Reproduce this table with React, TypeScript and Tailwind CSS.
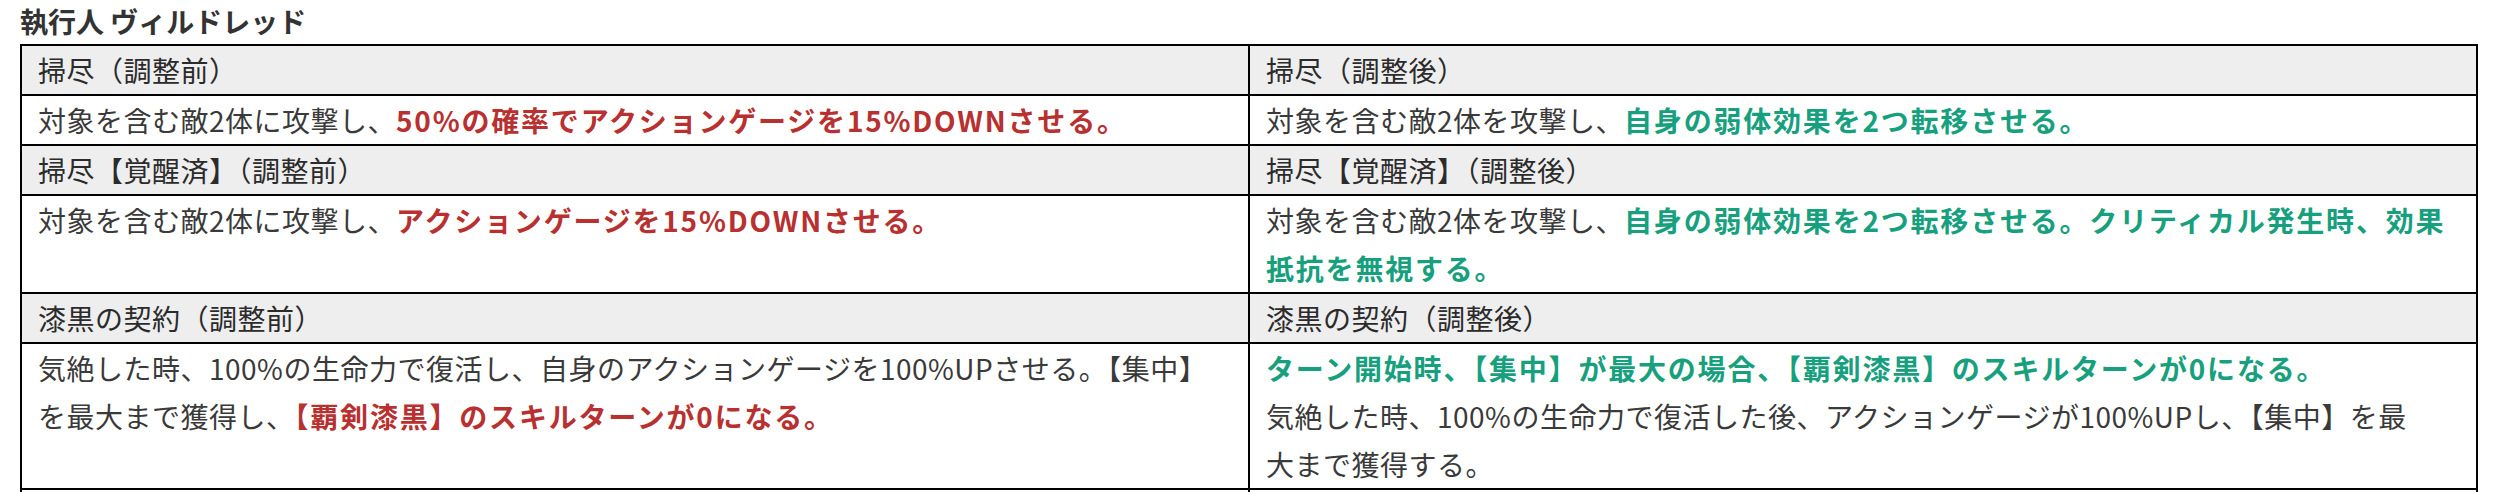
import type { ReactNode } from 'react'

const red = 'font-bold tracking-[1.8px] text-[#b8302f]'
const green = 'font-bold tracking-[1.8px] text-[#17a07d]'

function Head({ children }: { children: ReactNode }) {
  return (
    <div className="border-r-2 border-b-2 border-black bg-[#eeeeee] px-4 text-[#2b2b2b]">{children}</div>
  )
}

function Cell({ children }: { children: ReactNode }) {
  return (
    <div className="border-r-2 border-b-2 border-black bg-white px-4 whitespace-nowrap text-[#3a3a3a]">
      {children}
    </div>
  )
}

export default function App() {
  return (
    <div
      className="min-h-[492px] bg-white pl-5 text-[28px] leading-[48px] tracking-[0.5px]"
      style={{ fontFamily: '"Noto Sans CJK JP", "Noto Sans", sans-serif' }}
    >
      <h2 className="mb-[2px] font-bold leading-[42px] tracking-normal text-[#333333]">執行人 ヴィルドレッド</h2>
      <div className="grid w-[2458px] grid-cols-2 border-t-2 border-l-2 border-black">
        <Head>掃尽（調整前）</Head>
        <Head>掃尽（調整後）</Head>
        <Cell>
          対象を含む敵2体に攻撃し、<span className={red}>50%の確率でアクションゲージを15%DOWNさせる。</span>
        </Cell>
        <Cell>
          対象を含む敵2体を攻撃し、<span className={green}>自身の弱体効果を2つ転移させる。</span>
        </Cell>

        <Head>掃尽【覚醒済】（調整前）</Head>
        <Head>掃尽【覚醒済】（調整後）</Head>
        <Cell>
          対象を含む敵2体に攻撃し、<span className={red}>アクションゲージを15%DOWNさせる。</span>
        </Cell>
        <Cell>
          対象を含む敵2体を攻撃し、
          <span className={green}>
            自身の弱体効果を2つ転移させる。クリティカル発生時、効果
            <br />
            抵抗を無視する。
          </span>
        </Cell>

        <Head>漆黒の契約（調整前）</Head>
        <Head>漆黒の契約（調整後）</Head>
        <Cell>
          気絶した時、100%の生命力で復活し、自身のアクションゲージを100%UPさせる。【集中】
          <br />
          を最大まで獲得し、<span className={red}>【覇剣漆黒】のスキルターンが0になる。</span>
        </Cell>
        <Cell>
          <span className={green}>ターン開始時、【集中】が最大の場合、【覇剣漆黒】のスキルターンが0になる。</span>
          <br />
          気絶した時、100%の生命力で復活した後、アクションゲージが100%UPし、【集中】を最
          <br />
          大まで獲得する。
        </Cell>

        <Cell>&nbsp;</Cell>
        <Cell>&nbsp;</Cell>
      </div>
    </div>
  )
}
